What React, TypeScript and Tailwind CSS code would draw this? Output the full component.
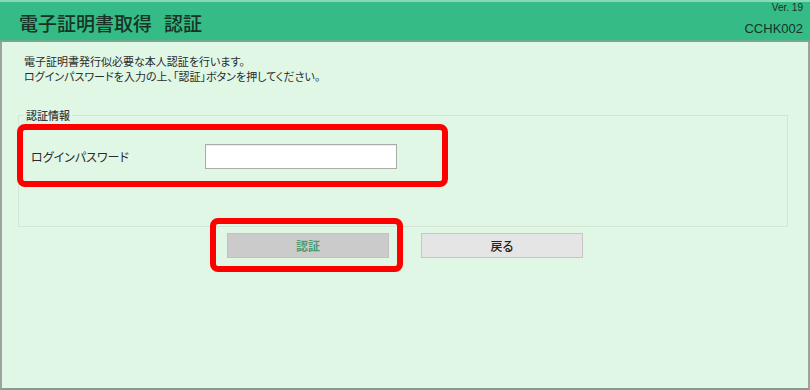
export default function App() {
  return (
    <div className="relative flex h-[390px] w-[810px] flex-col overflow-hidden bg-white font-['Noto_Sans_CJK_JP',sans-serif] text-[#333]">
      {/* header */}
      <div className="flex h-[42px] shrink-0 justify-between border-t-2 border-b-2 border-t-[#86d8b6] border-b-[#6fa98f] bg-[#34bb86] pl-[19px] pr-[7px]">
        <div className="flex items-center gap-[12px] pt-[2px] text-[19px] leading-none font-medium text-[#173325]">
          <span>電子証明書取得</span>
          <span>認証</span>
        </div>
        <div className="flex flex-col items-end font-['Liberation_Sans',sans-serif] text-[#173325]">
          <span className="mt-[-1px] text-[10px] leading-[14px]">Ver. 19</span>
          <span className="mt-[6px] text-[13px] leading-[16px]">CCHK002</span>
        </div>
      </div>

      {/* body */}
      <div className="flex flex-1 flex-col border-x-2 border-b-2 border-x-[#9aa39d] border-b-[#8e9892] bg-[#e0f7e6] text-[11px] [font-feature-settings:'palt']">
        <div className="pt-[12px] pl-[22px] leading-[15px] text-[#2b2b2b]">
          <p>電子証明書発行似必要な本人認証を行います。</p>
          <p>ログインパスワードを入力の上、「認証」ボタンを押してください。</p>
        </div>

        <fieldset className="mt-[24px] ml-[16px] mr-[20px] h-[119px] border border-[#d3e5d5] px-0 pt-0 pb-0">
          <legend className="ml-[5px] px-[2px] text-[11px] leading-[14px] font-medium text-[#3a3a3a]">認証情報</legend>
          <div className="flex items-center pt-[22px] pl-[12px]">
            <span className="w-[174px] text-[12px] text-[#2b2b2b]">ログインパスワード</span>
            <input
              type="password"
              className="h-[25px] w-[192px] border border-[#a9aca9] bg-white shadow-[inset_0_1px_1px_rgba(0,0,0,0.08)] outline-none"
            />
          </div>
        </fieldset>

        <div className="mt-[6px] flex gap-[32px] pl-[225px]">
          <button className="h-[25px] w-[162px] border border-[#c2c2c2] bg-[#cbcbcb] text-[12px] font-bold text-[#4f9a6e]">
            認証
          </button>
          <button className="h-[25px] w-[162px] border border-[#c6c6c6] bg-[#e5e5e5] text-[12px] font-medium text-[#222]">
            戻る
          </button>
        </div>
      </div>

      {/* annotation boxes */}
      <div className="pointer-events-none absolute left-[17px] top-[124px] h-[63px] w-[431px] rounded-[8px] border-[6px] border-[#ff0000]" />
      <div className="pointer-events-none absolute left-[210px] top-[218px] h-[54px] w-[193px] rounded-[8px] border-[6px] border-[#ff0000]" />
    </div>
  )
}
